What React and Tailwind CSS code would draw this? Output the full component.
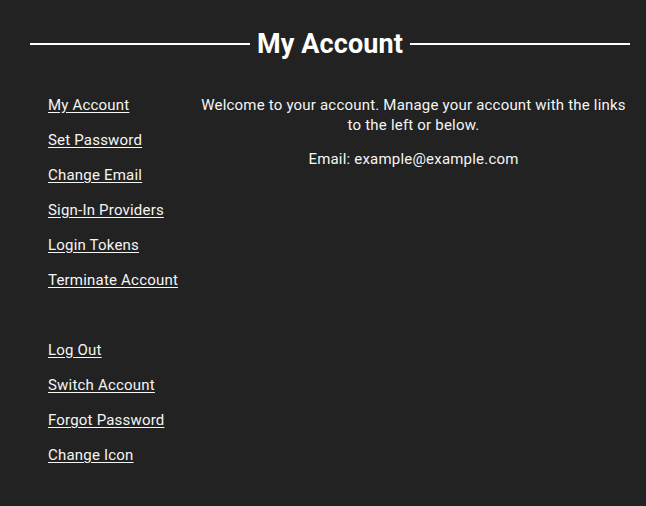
import React from 'react'

const mainLinks = ['My Account', 'Set Password', 'Change Email', 'Sign-In Providers', 'Login Tokens', 'Terminate Account']
const otherLinks = ['Log Out', 'Switch Account', 'Forgot Password', 'Change Icon']

export default function App() {
  return (
    <div className="min-h-[506px] bg-[#222222] text-[#f5f5f5] pl-[30px] pr-[16px] pt-[26px] font-['Roboto',sans-serif]">
      <div className="flex items-center gap-[7px]">
        <div className="flex-1 h-[2px] bg-white" />
        <h1 className="text-[27px] leading-[36px] font-bold text-white tracking-[0.1px]">My Account</h1>
        <div className="flex-1 h-[2px] bg-white" />
      </div>
      <div className="flex mt-[33px] pl-[18px]">
        <nav className="w-[149px] shrink-0 flex flex-col text-[15px] leading-[20px] tracking-[0.2px]">
          {mainLinks.map((l) => (
            <a key={l} href="#" className="underline underline-offset-2 h-[35px] whitespace-nowrap">{l}</a>
          ))}
          <div className="h-[35px]" />
          {otherLinks.map((l) => (
            <a key={l} href="#" className="underline underline-offset-2 h-[35px] whitespace-nowrap">{l}</a>
          ))}
        </nav>
        <div className="flex-1 text-center text-[15px] leading-[20px] tracking-[0.2px]">
          <p>Welcome to your account. Manage your account with the links to the left or below.</p>
          <p className="mt-[14px]">Email: example@example.com</p>
        </div>
      </div>
    </div>
  )
}
